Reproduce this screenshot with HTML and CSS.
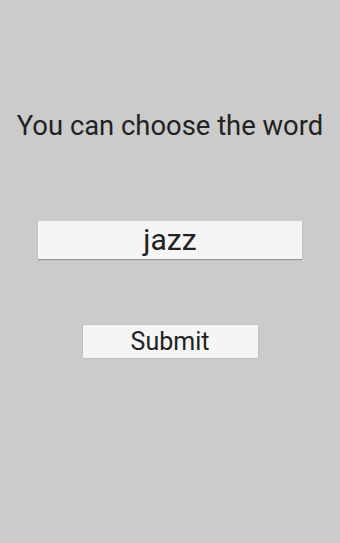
FILE: index.html
```html
<!DOCTYPE html>
<html>
<head>
<meta charset="utf-8">
<link rel="stylesheet" href="styles.css">
</head>
<body>
<div class="screen">
  <div class="title">You can choose the word</div>
  <div class="word">jazz</div>
  <div class="submit">Submit</div>
</div>
</body>
</html>
```
FILE: styles.css
```css
html, body {
  margin: 0;
  padding: 0;
  background: #cbcbcb;
}
.screen {
  width: 340px;
  height: 543px;
  display: flex;
  flex-direction: column;
  align-items: center;
  font-family: Roboto, "Noto Sans", sans-serif;
  color: #222;
}
.title {
  margin-top: 110px;
  font-size: 27.4px;
  line-height: 32px;
  white-space: nowrap;
}
.word {
  margin-top: 79px;
  width: 264px;
  height: 38px;
  background: #f5f5f5;
  box-shadow: 0 1px 1px rgba(0,0,0,0.25);
  text-align: center;
  font-size: 30px;
  line-height: 38px;
}
.submit {
  margin-top: 66px;
  width: 175px;
  height: 33px;
  background: #f5f5f5;
  box-shadow: 0 0 1px rgba(0,0,0,0.3);
  text-align: center;
  font-size: 25px;
  line-height: 33px;
}
```
